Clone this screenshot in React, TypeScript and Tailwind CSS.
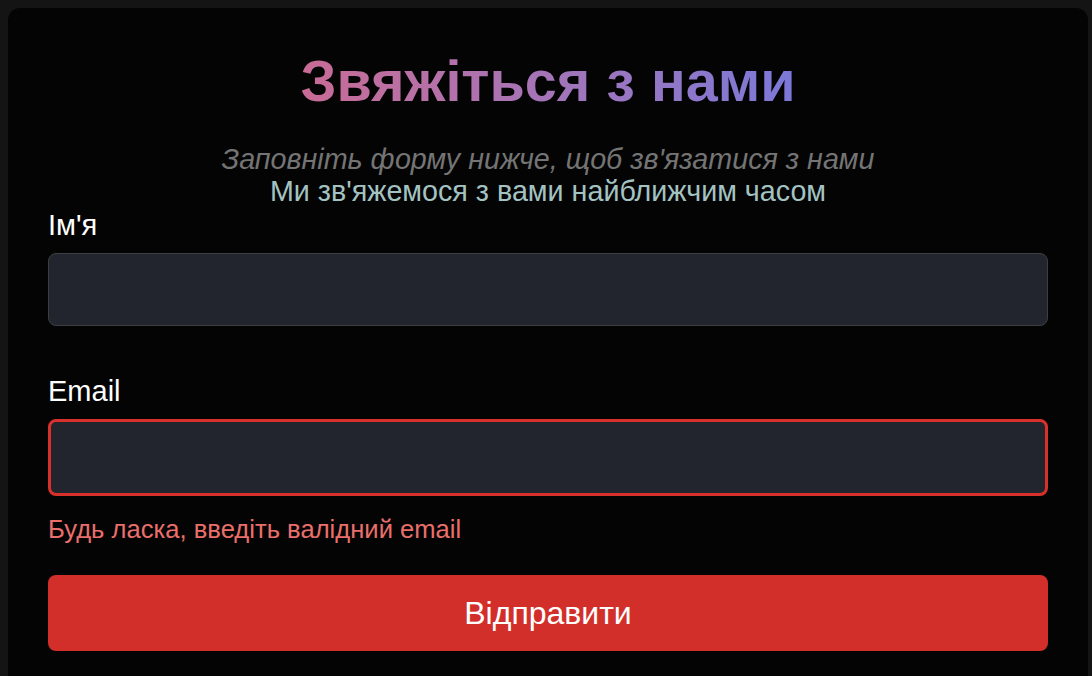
import React from "react";

export default function App() {
  return (
    <div className="min-h-screen bg-[#141414] pl-2 pr-1 pt-2 font-['Liberation_Sans',Arial,sans-serif]">
      <div className="rounded-xl bg-[#040404] px-10 pt-[44px] pb-10">
        <div className="text-center">
          <h1 className="inline-block bg-gradient-to-r from-[#c96b95] to-[#7b78d8] bg-clip-text text-[57.5px] font-bold leading-[58px] text-transparent">
            Звяжіться з нами
          </h1>
        </div>
        <div className="mt-[33px] text-center text-[28.7px] leading-[32px]">
          <p className="italic text-[#747474]">
            Заповніть форму нижче, щоб зв'язатися з нами
          </p>
          <p className="text-[#a3c3c3]">Ми зв'яжемося з вами найближчим часом</p>
        </div>
        <form className="mt-[2px]" onSubmit={(e) => e.preventDefault()}>
          <div>
            <label className="block text-[29px] leading-[32px] text-white">Ім'я</label>
            <input
              type="text"
              className="mt-3 block h-[73px] w-full rounded-lg border border-[#3d3e40] bg-[#22252d] px-4 text-white outline-none"
            />
          </div>
          <div className="mt-[49px]">
            <label className="block text-[29px] leading-[32px] text-white">Email</label>
            <input
              type="email"
              className="mt-3 block h-[77px] w-full rounded-lg border-[3px] border-[#d8302b] bg-[#22252d] px-4 text-white outline-none"
            />
            <p className="mt-[17px] text-[25.6px] leading-[32px] text-[#ea6f6a]">
              Будь ласка, введіть валідний email
            </p>
          </div>
          <button
            type="submit"
            className="mt-[30px] flex h-[76px] w-full items-center justify-center rounded-lg bg-[#d32f2a] text-[32px] text-white"
          >
            Відправити
          </button>
        </form>
      </div>
    </div>
  );
}
